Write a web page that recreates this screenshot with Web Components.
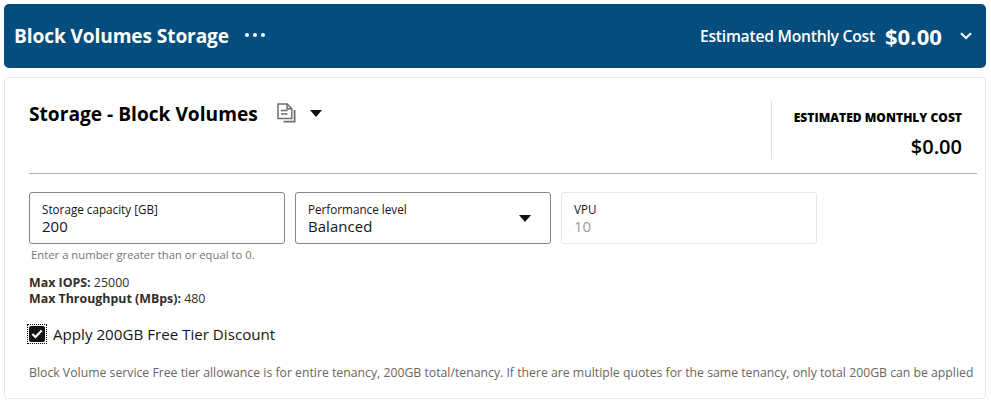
<!DOCTYPE html>
<html lang="en"><head><meta charset="utf-8"><title>Block Volumes Storage</title>
<style>
html,body{margin:0;padding:0;background:#fff}
body{font-family:"Open Sans","Noto Sans",sans-serif;color:#000;width:991px;height:405px;overflow:hidden}
app-root{padding:4px 5px 0 4px;}
</style></head><body>
<app-root>
  <section-header title-text="Block Volumes Storage" cost-label="Estimated Monthly Cost" cost="$0.00"></section-header>
  <content-card>
    <card-heading slot="head" title-text="Storage - Block Volumes" cost-label="ESTIMATED MONTHLY COST" cost="$0.00"></card-heading>
    <div style="display:flex;gap:10px">
      <field-box label="Storage capacity [GB]" value="200" hint="Enter a number greater than or equal to 0."></field-box>
      <field-box label="Performance level" value="Balanced" select></field-box>
      <field-box label="VPU" value="10" disabled></field-box>
    </div>
    <stat-lines>
      <div><b>Max IOPS:</b> 25000</div>
      <div><b>Max Throughput (MBps):</b> 480</div>
    </stat-lines>
    <check-row label="Apply 200GB Free Tier Discount"></check-row>
    <note-text>Block Volume service Free tier allowance is for entire tenancy, 200GB total/tenancy. If there are multiple quotes for the same tenancy, only total 200GB can be applied</note-text>
  </content-card>
</app-root>
<script>
function def(name, css, html){
  customElements.define(name, class extends HTMLElement{
    connectedCallback(){
      if(this.shadowRoot) return;
      const a = n => this.getAttribute(n) || '';
      const r = this.attachShadow({mode:'open'});
      r.innerHTML = '<style>'+css+'</style>'+html(a, this);
    }
  });
}
def('app-root', ':host{display:block}', ()=>'<slot></slot>');
def('section-header', `
  :host{display:flex;align-items:center;height:64px;background:#034e7f;border-radius:5px;color:#fff;padding:0 14px 0 10px;box-sizing:border-box}
  .t{font-size:19.1px;font-weight:700;line-height:28px;letter-spacing:-.1px}
  .dots{display:flex;gap:4px;margin-left:16px;margin-top:-3px}
  .dots i{width:4px;height:4px;border-radius:50%;background:#fff;display:block}
  .sp{flex:1}
  .l{font-size:15.7px;font-weight:600;letter-spacing:-.25px}
  .c{font-size:22px;font-weight:700;margin-left:10px;line-height:28px;letter-spacing:.1px}
  svg{margin-left:18px;display:block}
`, a=>`<span class="t">${a('title-text')}</span><span class="dots"><i></i><i></i><i></i></span><span class="sp"></span>
  <span class="l">${a('cost-label')}</span><span class="c">${a('cost')}</span>
  <svg width="12" height="8" viewBox="0 0 12 8"><path d="M1 1.2 6 6l5-4.8" fill="none" stroke="#fff" stroke-width="2"/></svg>`);
def('content-card', `
  :host{display:block;margin-top:9px;height:322px;box-sizing:border-box;border:1px solid #e6e6e6;border-radius:4px;padding:0 13px 0 24px;background:#fff}
`, ()=>'<slot name="head"></slot><slot></slot>');
def('card-heading', `
  :host{display:flex;height:96px;border-bottom:1px solid #b0b0b0;box-sizing:border-box;margin-right:-5px;margin-bottom:18px;padding-top:22px}
  .l{flex:1;display:flex;align-items:flex-start}
  h2{margin:0;font-size:19.15px;font-weight:700;line-height:28px;letter-spacing:0}
  .doc{margin-left:19px;margin-top:3px}
  .caret{margin-left:14px;margin-top:10px}
  .r{width:206px;height:58px;margin-top:1px;border-left:1px solid #e0e0e0;box-sizing:border-box;text-align:right;padding-right:15px}
  .a{font-size:12px;font-weight:800;line-height:16px;margin-top:9px;letter-spacing:.03px}
  .b{font-size:20px;font-weight:600;line-height:28px;margin-top:7px}
`, a=>`<div class="l"><h2>${a('title-text')}</h2>
  <svg class="doc" width="19" height="20" viewBox="0 0 19 20" fill="none" stroke="#6f6f6f" stroke-width="1.5"><path d="M1 1h9.2L14.8 5.6V15.6H1z"/><path d="M10 1v4.8h4.8M4 7.6h6.6M4 11h6.6"/><path d="M17.6 7v11.6H6.6" stroke-width="1.8"/></svg>
  <svg class="caret" width="12" height="7" viewBox="0 0 12 7"><path d="M0 0h12L6 7z" fill="#111"/></svg></div>
  <div class="r"><div class="a">${a('cost-label')}</div><div class="b">${a('cost')}</div></div>`);
def('field-box', `
  :host{display:block;width:256px;flex:none}
  .box{position:relative;height:52px;box-sizing:border-box;border:1px solid #858585;border-radius:3px;padding:8px 12px 0;background:#fff}
  :host([disabled]) .box{border-color:#e6e6e6}
  .l{font-size:11.7px;line-height:16px;color:#161513}
  .v{font-size:14.9px;line-height:18px;color:#161513;letter-spacing:.1px}
  :host([disabled]) .v{color:#9a9a9a}
  svg{position:absolute;right:19px;top:22px}
  .h{font-size:11.3px;line-height:16px;color:#7a7370;margin:3px 0 0 2px;white-space:nowrap}
`, (a,el)=>`<div class="box"><div class="l">${a('label')}</div><div class="v">${a('value')}</div>
  ${el.hasAttribute('select')?'<svg width="12" height="7" viewBox="0 0 12 7"><path d="M0 0h12L6 7z" fill="#111"/></svg>':''}</div>
  ${a('hint')?`<div class="h">${a('hint')}</div>`:''}`);
def('stat-lines', `
  :host{display:block;font-size:12.4px;line-height:16px;margin-top:12px;color:#312d2a}
  ::slotted(div){white-space:nowrap}
`, ()=>'<slot></slot>');
def('check-row', `
  :host{display:flex;align-items:center;margin:16px 0 0 -2px;height:22px;font-size:15.15px;color:#161513}
  .f{outline:1px dotted #000;outline-offset:-1px;width:20px;height:20px;display:flex;align-items:center;justify-content:center;margin-right:6px}
  .k{width:16px;height:16px;background:#161513;border-radius:2px;display:flex;align-items:center;justify-content:center}
`, a=>`<span class="f"><span class="k"><svg width="12" height="10" viewBox="0 0 12 10"><path d="M1.3 5 4.5 8 10.7 1.6" fill="none" stroke="#fff" stroke-width="2.2"/></svg></span></span><span>${a('label')}</span>`);
def('note-text', `
  :host{display:block;font-size:12.25px;line-height:16px;color:#6b6560;margin-top:20px;white-space:nowrap}
`, ()=>'<slot></slot>');
</script>
</body></html>
